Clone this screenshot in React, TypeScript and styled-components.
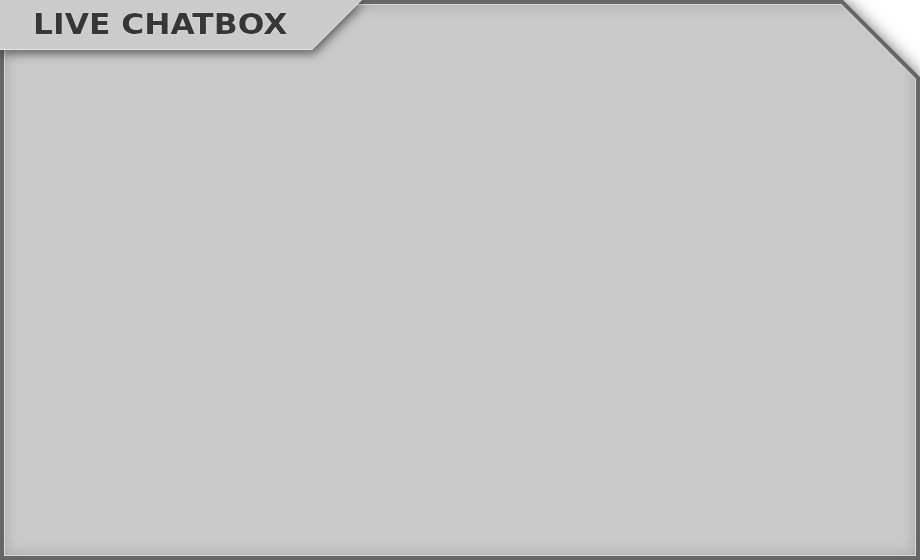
import React from "react";
import styled, { createGlobalStyle } from "styled-components";

const GlobalStyle = createGlobalStyle`
  html, body {
    margin: 0;
    padding: 0;
    background: #ffffff;
  }
  #root {
    width: 920px;
    height: 560px;
  }
`;

const cut = (size: number) =>
  `polygon(0 0, calc(100% - ${size}px) 0, 100% ${size}px, 100% 100%, 0 100%)`;

const Stage = styled.div`
  position: relative;
  width: 920px;
  height: 560px;
  filter: drop-shadow(0 0 8px rgba(0, 0, 0, 0.55));
`;

const Frame = styled.div`
  box-sizing: border-box;
  width: 100%;
  height: 100%;
  padding: 4px;
  display: flex;
  background: #666666;
  clip-path: ${cut(77)};
`;

const Rim = styled.div`
  flex: 1;
  display: flex;
  padding: 1px;
  background: #d9d9d9;
  clip-path: ${cut(74.66)};
`;

const Panel = styled.div`
  flex: 1;
  background: #c9c9c9;
  clip-path: ${cut(74.07)};
  box-shadow: inset 0 0 14px rgba(0, 0, 0, 0.18);
`;

const TabShadow = styled.div`
  position: absolute;
  top: 0;
  left: 0;
  filter: drop-shadow(2px 4px 5px rgba(0, 0, 0, 0.5));
`;

const TabEdge = styled.div`
  width: 362px;
  height: 50px;
  background: #e4e4e4;
  clip-path: polygon(0 0, 100% 0, calc(100% - 50px) 100%, 0 100%);
`;

const TabFace = styled.div`
  box-sizing: border-box;
  width: 360.6px;
  height: 49px;
  padding-left: 33px;
  display: flex;
  align-items: center;
  background: #cbcbcb;
  clip-path: polygon(0 0, 100% 0, calc(100% - 49px) 100%, 0 100%);
`;

const Title = styled.h1`
  margin: 0;
  margin-top: 0px;
  font-family: "DejaVu Sans", "Liberation Sans", sans-serif;
  font-weight: bold;
  font-size: 28px;
  line-height: 1;
  letter-spacing: 0;
  color: #373737;
  white-space: nowrap;
  transform: scaleX(1.12);
  transform-origin: left center;
  text-shadow: 0 0 1px #f2f2f2, 0 0 1px #f2f2f2;
`;

export default function App() {
  return (
    <>
      <GlobalStyle />
      <Stage>
        <Frame>
          <Rim>
            <Panel />
          </Rim>
        </Frame>
        <TabShadow>
          <TabEdge>
            <TabFace>
              <Title>LIVE CHATBOX</Title>
            </TabFace>
          </TabEdge>
        </TabShadow>
      </Stage>
    </>
  );
}
